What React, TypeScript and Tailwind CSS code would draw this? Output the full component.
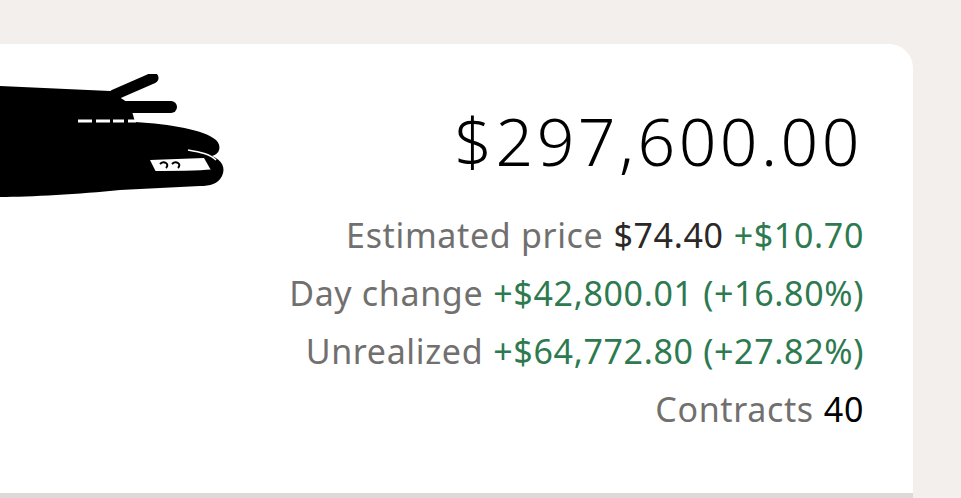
import React from 'react';

const Redaction: React.FC = () => (
  <svg width="230" height="140" viewBox="0 0 230 140" className="block">
    {/* black marker scribble over the hidden text */}
    <path d="M0 12 L110 17 L130 30 L135 48 C170 50 205 56 216 66 C222 72 220 80 212 82 C222 86 226 94 222 102 C218 110 210 112 200 112 L120 116 C80 120 30 123 0 123 Z" fill="#000" />
    <path d="M114 21 L153 4" stroke="#000" strokeWidth="11" strokeLinecap="round" />
    <path d="M98 33 L171 33" stroke="#000" strokeWidth="12" strokeLinecap="round" />
    <path d="M78 47 L92 47 M96 47 L110 47 M113 47 L124 47 M128 47 L136 47" stroke="#fff" strokeWidth="3" />
    <path d="M150 86 L204 84 L212 98 L156 98 Z" fill="#fff" />
    <path d="M160 90 C164 86 170 90 166 94 M172 90 C176 86 182 90 178 94" stroke="#000" strokeWidth="2" fill="none" />
    <path d="M150 100 C180 100 206 100 214 98" stroke="#000" strokeWidth="6" fill="none" strokeLinecap="round" />
    <path d="M188 76 C200 78 210 80 216 86" stroke="#fff" strokeWidth="1.5" fill="none" />
  </svg>
);

type Row = { label: string; parts: { text: string; tone: 'dark' | 'green' | 'black' }[] };

const rows: Row[] = [
  { label: 'Estimated price', parts: [{ text: '$74.40', tone: 'dark' }, { text: '+$10.70', tone: 'green' }] },
  { label: 'Day change', parts: [{ text: '+$42,800.01 (+16.80%)', tone: 'green' }] },
  { label: 'Unrealized', parts: [{ text: '+$64,772.80 (+27.82%)', tone: 'green' }] },
  { label: 'Contracts', parts: [{ text: '40', tone: 'black' }] },
];

const toneClass = {
  dark: 'text-[#2b2827]',
  green: 'text-[#2e7a50]',
  black: 'text-black',
};

const App: React.FC = () => {
  return (
    <div className="w-[961px] h-[498px] bg-[#f2efec] overflow-hidden pt-[44px] pr-[48px]" style={{ fontFamily: '"Noto Sans", Lato, sans-serif' }}>
      {/* Position card */}
      <div className="h-[454px] bg-white rounded-tr-[24px] border-b-[5px] border-[#dcd9d6] flex justify-between">
        <div className="pt-[30px]">
          <Redaction />
        </div>

        <div className="flex flex-col items-end pr-[49px] pt-[58px]">
          <div className="text-[66px] leading-[76px] font-light text-black tracking-[3.5px] mr-[1px]">$297,600.00</div>
          <div className="mt-[28px] flex flex-col items-end">
            {rows.map((row) => (
              <div key={row.label} className="text-[34px] leading-[58px] flex gap-[10px] tracking-[0.65px]">
                <span className="text-[#71706e]">{row.label}</span>
                {row.parts.map((p) => (
                  <span key={p.text} className={toneClass[p.tone]}>{p.text}</span>
                ))}
              </div>
            ))}
          </div>
        </div>
      </div>
    </div>
  );
};

export default App;
